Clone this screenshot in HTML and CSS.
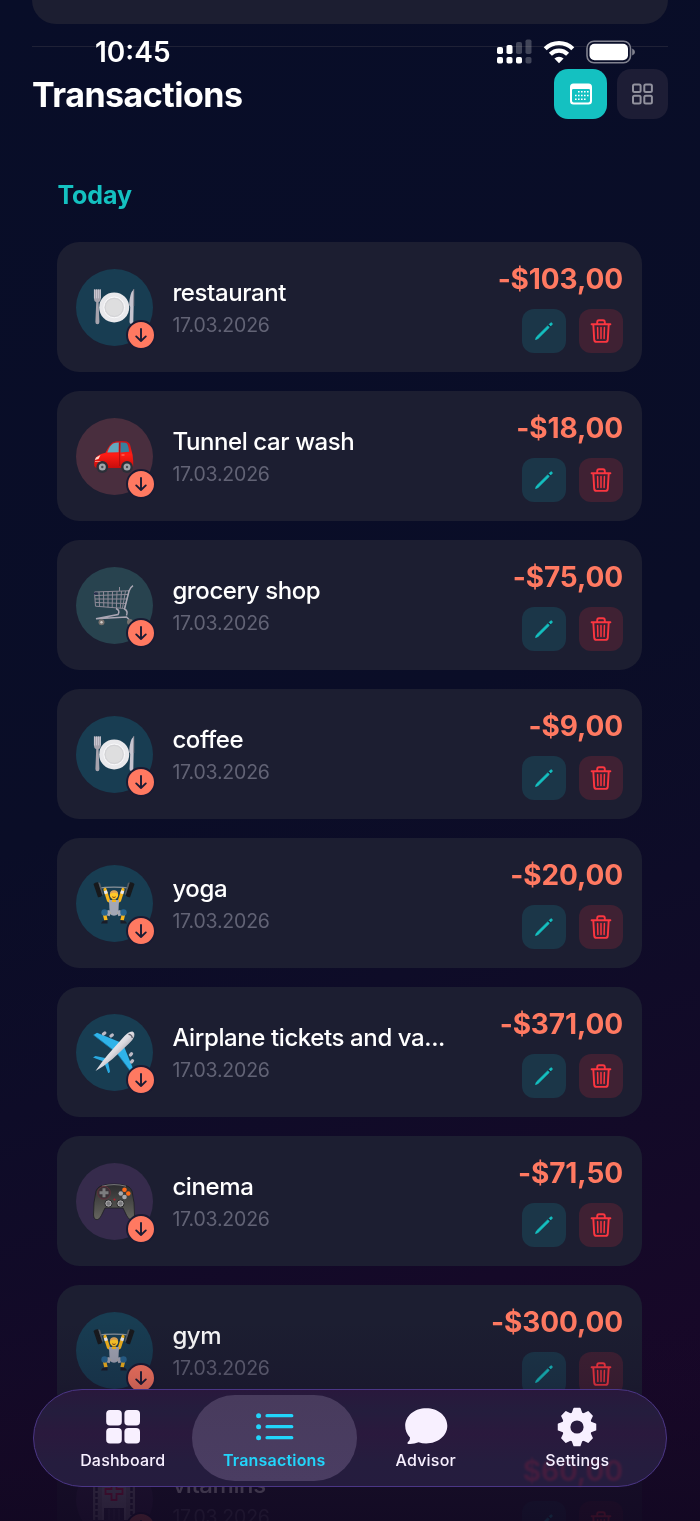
FILE: index.html
```html
<!DOCTYPE html>
<html lang="en">
<head>
    <meta charset="UTF-8">
    <meta name="viewport" content="width=device-width, initial-scale=1.0">
    <title>Transactions</title>
    <link rel="stylesheet" href="styles.css">
</head>
<body>
    <svg class="sprite" aria-hidden="true">
        <defs>
            <linearGradient id="metal" x1=".3" y1=".3" x2=".7" y2=".7">
                <stop offset="0" stop-color="#f4f3f7"/>
                <stop offset=".5" stop-color="#dcdae0"/>
                <stop offset="1" stop-color="#9b98a3"/>
            </linearGradient>
            <linearGradient id="red-paint" x1="0" y1="0" x2="0" y2="1">
                <stop offset="0" stop-color="#c3151a"/>
                <stop offset=".5" stop-color="#ff1c14"/>
                <stop offset="1" stop-color="#c80d0d"/>
            </linearGradient>
            <linearGradient id="pad-body" x1="0" y1="0" x2="0" y2="1">
                <stop offset="0" stop-color="#2b2b2e"/>
                <stop offset="1" stop-color="#66665f"/>
            </linearGradient>
        </defs>
        <symbol id="arrow-down" viewBox="0 0 26 26">
            <path d="M13 7v12M8.200 14.400 13 19l4.800-4.600" fill="none" stroke="#1a1b33" stroke-width="1.900" stroke-linecap="round" stroke-linejoin="round"/>
        </symbol>
        <symbol id="pencil" viewBox="0 0 24 24">
            <path d="M3.600 20.500 4.500 18 15.700 6.900 17.200 8.400 6 19.500Z" fill="currentColor" stroke="currentColor" stroke-width=".9" stroke-linejoin="round"/>
            <path d="M17.300 5.300 18.400 4.200a1 1 0 0 1 1.500 1.500L18.800 6.800Z" fill="currentColor" stroke="currentColor" stroke-width="1"/>
        </symbol>
        <symbol id="trash" viewBox="0 0 24 26">
            <path d="M2.600 6.200h18.800M8.200 6V4.200Q8.200 2.200 10 2.200h4q1.800 0 1.800 2V6M4.300 6.400 5.200 21.600Q5.400 23.900 7.600 23.900h8.800q2.200 0 2.400-2.300L19.700 6.400" fill="none" stroke="currentColor" stroke-width="1.900" stroke-linecap="round"/>
            <path d="M8.600 9.600l.3 11M12 9.600v11M15.400 9.600l-.3 11" fill="none" stroke="currentColor" stroke-width="1.500" stroke-linecap="round"/>
        </symbol>
        <symbol id="plate" viewBox="0 0 42 42">
            <path d="M1 3.500v9.500q0 2.600 2.200 3.200L2.400 36q0 2.200 2 2.200t2-2.200L5.600 16.200Q7.800 15.600 7.800 13V3.500" fill="#a6a3ad"/>
            <path d="M1.400 3.400v9M3.500 3.400v9M5.400 3.400v9M7.400 3.400v9" stroke="#d3d1da" stroke-width=".8"/>
            <path d="M41 3q-4.500 4-4.800 16l1 2-.7 15q0 2 1.900 2t1.900-2Z" fill="#c6c4cf"/>
            <path d="M40.800 3v17" stroke="#7d7a86" stroke-width=".8"/>
            <circle cx="21.200" cy="21.400" r="15" fill="#e9e9ec"/>
            <circle cx="21.200" cy="21.400" r="10.400" fill="#dededf" stroke="#f9f9fb" stroke-width="1"/>
            <circle cx="21.200" cy="21.400" r="9" fill="none" stroke="#c9c9cf" stroke-width=".6"/>
        </symbol>
        <symbol id="car" viewBox="0 0 42 42">
            <path d="M1.300 31q-.7-7 3-10 3.500-2.200 8.200-3.200Q16 10 19.400 7.400 23.500 5.800 32 6.200q4 .3 5.200 4L39.600 20q1 7 .6 11.500L37 33H3Z" fill="url(#red-paint)"/>
            <path d="M14.200 17.500Q16.500 10.800 20 8.600q2.600-1 5.800-1l-.2 9.600Z" fill="#62a9be"/>
            <path d="M27.600 7.600q5.400-.2 6.600 1.200 1.600 3 2 8l-8.700.6Z" fill="#397f9d"/>
            <path d="M26.600 8v23" stroke="#a30c10" stroke-width=".8"/>
            <path d="M3 22.500 7.500 20l-2 4-3.600 1Z" fill="#ffd9ce"/>
            <path d="M2 26.500h6M28.500 20h3" stroke="#ff8171" stroke-width="1"/>
            <circle cx="9.300" cy="32" r="5.900" fill="#2b2f38"/>
            <circle cx="9.300" cy="32" r="3.500" fill="#a2a6ab"/>
            <circle cx="9.300" cy="32" r="1.200" fill="#4a4e56"/>
            <circle cx="34" cy="32" r="5.900" fill="#2b2f38"/>
            <circle cx="34" cy="32" r="3.500" fill="#a2a6ab"/>
            <circle cx="34" cy="32" r="1.200" fill="#4a4e56"/>
        </symbol>
        <symbol id="cart" viewBox="0 0 42 42">
            <g fill="none" stroke="#8f8b98" stroke-width="1">
                <path d="M1.500 8 36 6.800 31.500 24.500 2.500 22.200Z"/>
                <path d="M2 11.500 35 10.500M2 15 34 15M2.300 18.500 33 19.500M6 8l.5 14.500M10.500 7.800l.3 15M15 7.700v15.500M19.500 7.500l-.3 16M24 7.300l-.6 16.500M28.500 7l-1.200 17M32.500 7 29.500 24M26.500 3v4"/>
                <path d="M40 1.600q-2.500 1.400-4 5.500L31.500 25q3.800 2 2 6.500" stroke="#aaa6b3" stroke-width="1.500"/>
                <path d="M23 24.500q4.500 2 2 6L3 34.700 33.500 33l3 3" stroke="#aaa6b3" stroke-width="1.500"/>
            </g>
            <path d="M1 8.500h3.500v2H1Z" fill="#272a4c"/>
            <circle cx="8.500" cy="38.300" r="3" fill="#77716d"/>
            <circle cx="8.500" cy="38.300" r="1.200" fill="#d0ccc9"/>
            <circle cx="37" cy="38" r="3" fill="#77716d"/>
        </symbol>
        <symbol id="lifter" viewBox="0 0 42 42">
            <path d="M3 6.500Q21 3.800 39 6.500" fill="none" stroke="#8c949b" stroke-width="1.200"/>
            <path d="M.5 2Q2 0 5.200.3L9.500 13Q8 15.500 5 15.200Z" fill="#17191c"/>
            <path d="M5.200.5 7 .8 10.300 12 9.200 13Z" fill="#555a61"/>
            <path d="M41.500 2Q40 0 36.800.3L32.500 13q1.500 2.500 4.500 2.200Z" fill="#17191c"/>
            <path d="M36.800.5 35 .8 31.700 12l1.100 1Z" fill="#555a61"/>
            <path d="M12 7.500 15.500 18.500l4 2.500M30 7.500l-3.500 11-4 2.500" fill="none" stroke="#f6b61b" stroke-width="3.200" stroke-linecap="round" stroke-linejoin="round"/>
            <path d="m12.300 8.800 1 3M29.700 8.800l-1 3" stroke="#e7e8ef" stroke-width="3.200"/>
            <path d="M16 18 26 18 25.300 32q-4.300 3.500-8.600 0Z" fill="#a3a7b5"/>
            <path d="M19 17.500h4v2.500h-4Z" fill="#f6b61b"/>
            <circle cx="21" cy="13" r="4.200" fill="#ffc928"/>
            <path d="M17 12Q16.800 8.200 21 8.200t4 3.800Q21 9.500 17 12Z" fill="#dfa455"/>
            <path d="M19.300 14.800q1.700 1.500 3.400 0" fill="none" stroke="#843f10" stroke-width="1"/>
            <path d="M17 32 11 30 13 38.500M25 32l6-2L29 38.500" fill="none" stroke="#f6b61b" stroke-width="3.400" stroke-linejoin="round"/>
            <path d="m17.300 31.500-3.300-.8M24.700 31.500l3.300-.8" stroke="#a3a7b5" stroke-width="5.500"/>
            <circle cx="11.500" cy="30.500" r="3.200" fill="#27648e"/>
            <circle cx="30.500" cy="30.500" r="3.200" fill="#27648e"/>
            <path d="M14.500 38.200v3.300H8q.5-2.200 3.500-3.300ZM27.500 38.200v3.300H34q-.5-2.200-3.500-3.300Z" fill="#191d29"/>
        </symbol>
        <symbol id="plane" viewBox="0 0 42 42">
            <path d="M.5 4 4 1.800 29 12 20 19Z" fill="#2fb3e9"/>
            <path d="M38 41 40 37.500 30 13 23 21Z" fill="#2fb3e9"/>
            <path d="M.5 4 20 19M38 41 23 21" stroke="#167eac" stroke-width=".8"/>
            <path d="M0 26.500 2.500 25 14.500 27.500 12 31ZM15.500 43l1.500-2.500L14.500 28 11 31Z" fill="#29a9e0"/>
            <path d="M2.500 40Q9 30.500 15 23.500L31.500 5Q36 .6 39.500.600 42 1.500 41.200 5.500 40 9 36 12.500L19.500 28Q11.500 35 2.500 40Z" fill="url(#metal)"/>
            <path d="M35.500 3.300q3.300.2 3.800 3.700" fill="none" stroke="#5a5c68" stroke-width="1.300"/>
            <g stroke="#bcb9c4" stroke-width="3.200" stroke-linecap="round">
                <path d="m10.500 3 1.300-1M18 5l1.300-1M37.500 24l1-1.300M38.500 31l1-1.300"/>
            </g>
        </symbol>
        <symbol id="gamepad" viewBox="0 0 42 42">
            <path d="M3 11Q5 6 11 5.200 14 4 21 4t10 1.200Q37 6 39 11q2.700 11 2.500 24-.5 5-3.800 4.600-2 0-4-4L30 28H12L8.300 35.600q-2 4-4 4Q1 40 .5 35 .3 22 3 11Z" fill="url(#pad-body)" stroke="#191a1c" stroke-width=".7"/>
            <path d="M9 6.200Q21 3 33 6.200" fill="none" stroke="#77777a" stroke-width="1"/>
            <circle cx="11" cy="12.800" r="6.400" fill="#3a3237" stroke="#67303b" stroke-width=".9"/>
            <path d="M9.500 8.200h3v3h3v3h-3v3h-3v-3h-3v-3h3Z" fill="#7c7c7e"/>
            <circle cx="31.500" cy="9.800" r="2.300" fill="#ff6a18"/>
            <circle cx="35.300" cy="13.500" r="2.300" fill="#ff6a18"/>
            <circle cx="31.500" cy="17" r="2.300" fill="#a8a8ac"/>
            <circle cx="27.800" cy="13.500" r="2.300" fill="#a8a8ac"/>
            <circle cx="21.500" cy="19.500" r="1.100" fill="#b0202b"/>
            <circle cx="15.500" cy="23.500" r="3.700" fill="#a1a1a3" stroke="#29292b" stroke-width="1"/>
            <circle cx="27.500" cy="23.500" r="3.700" fill="#a1a1a3" stroke="#29292b" stroke-width="1"/>
            <circle cx="15.500" cy="23.500" r="1.900" fill="#77777a"/>
            <circle cx="27.500" cy="23.500" r="1.900" fill="#77777a"/>
        </symbol>
        <symbol id="hospital" viewBox="0 0 42 42">
            <path d="M0 7h9V0h24v7h9v35H0Z" fill="#8c8a96"/>
            <path d="M9 0h24v42H9Z" fill="#a5a3b0"/>
            <path d="M3.500 9v33M38.500 9v33" stroke="#2d2a44" stroke-width="2.500" stroke-dasharray="4 2"/>
            <path d="M18.500 5h5v6h6v5h-6v6h-5v-6h-6v-5h6Z" fill="none" stroke="#e01f50" stroke-width="1.800"/>
            <path d="M11 30h20v12H11Z" fill="#35324d"/>
            <path d="M16 31v11M21 31v11M26 31v11" stroke="#5d5973" stroke-width="1"/>
        </symbol>
    </svg>

    <div class="screen">
        <div class="previous-card"></div>
        <hr class="divider">

        <header class="page-header">
            <h1>Transactions</h1>
            <div class="view-switch">
                <button class="view-btn view-btn-list" aria-label="By date">
                    <svg width="24" height="22" viewBox="0 0 24 22">
                        <path fill="#fff" fill-rule="evenodd" d="M4.500.5h15q3.500 0 3.500 3.500v14q0 3.500-3.500 3.500h-15Q1 21.500 1 18V4Q1 .5 4.500.5ZM4.300 6Q3 6 3 7.300v10.400q0 1.700 1.700 1.700h14.600q1.700 0 1.700-1.700V7.300Q21 6 19.700 6Z"/>
                        <g fill="#fff">
                            <path d="M9 8h1.600v1.600H9zM12 8h1.600v1.600H12zM15 8h1.600v1.600H15zM18 8h1.600v1.600H18zM6 11.700h1.600v1.600H6zM9 11.700h1.600v1.600H9zM12 11.700h1.600v1.600H12zM15 11.700h1.600v1.600H15zM18 11.700h1.600v1.600H18zM6 15.400h1.600V17H6zM9 15.400h1.600V17H9zM12 15.400h1.600V17H12zM15 15.400h1.600V17H15z"/>
                        </g>
                    </svg>
                </button>
                <button class="view-btn view-btn-grid" aria-label="By category">
                    <svg width="22" height="22" viewBox="0 0 22 22" fill="none" stroke="#92929e" stroke-width="2">
                        <rect x="1" y="1.500" width="7.600" height="7.600" rx="1.500"/>
                        <rect x="12.300" y="1.500" width="7.600" height="7.600" rx="1.500"/>
                        <rect x="1" y="12.800" width="7.600" height="7.600" rx="1.500"/>
                        <rect x="12.300" y="12.800" width="7.600" height="7.600" rx="1.500"/>
                    </svg>
                </button>
            </div>
        </header>

        <main class="day">
            <h2>Today</h2>
            <ul class="list">
                <li class="card">
                    <div class="category blue">
                        <svg class="emoji"><use href="#plate"/></svg>
                        <svg class="badge"><use href="#arrow-down"/></svg>
                    </div>
                    <div class="info">
                        <p class="name">restaurant</p>
                        <p class="date">17.03.2026</p>
                    </div>
                    <div class="side">
                        <p class="amount">-$103,00</p>
                        <div class="actions">
                            <button class="edit" aria-label="Edit"><svg><use href="#pencil"/></svg></button>
                            <button class="delete" aria-label="Delete"><svg><use href="#trash"/></svg></button>
                        </div>
                    </div>
                </li>
                <li class="card">
                    <div class="category red">
                        <svg class="emoji"><use href="#car"/></svg>
                        <svg class="badge"><use href="#arrow-down"/></svg>
                    </div>
                    <div class="info">
                        <p class="name">Tunnel car wash</p>
                        <p class="date">17.03.2026</p>
                    </div>
                    <div class="side">
                        <p class="amount">-$18,00</p>
                        <div class="actions">
                            <button class="edit" aria-label="Edit"><svg><use href="#pencil"/></svg></button>
                            <button class="delete" aria-label="Delete"><svg><use href="#trash"/></svg></button>
                        </div>
                    </div>
                </li>
                <li class="card">
                    <div class="category green">
                        <svg class="emoji"><use href="#cart"/></svg>
                        <svg class="badge"><use href="#arrow-down"/></svg>
                    </div>
                    <div class="info">
                        <p class="name">grocery shop</p>
                        <p class="date">17.03.2026</p>
                    </div>
                    <div class="side">
                        <p class="amount">-$75,00</p>
                        <div class="actions">
                            <button class="edit" aria-label="Edit"><svg><use href="#pencil"/></svg></button>
                            <button class="delete" aria-label="Delete"><svg><use href="#trash"/></svg></button>
                        </div>
                    </div>
                </li>
                <li class="card">
                    <div class="category blue">
                        <svg class="emoji"><use href="#plate"/></svg>
                        <svg class="badge"><use href="#arrow-down"/></svg>
                    </div>
                    <div class="info">
                        <p class="name">coffee</p>
                        <p class="date">17.03.2026</p>
                    </div>
                    <div class="side">
                        <p class="amount">-$9,00</p>
                        <div class="actions">
                            <button class="edit" aria-label="Edit"><svg><use href="#pencil"/></svg></button>
                            <button class="delete" aria-label="Delete"><svg><use href="#trash"/></svg></button>
                        </div>
                    </div>
                </li>
                <li class="card">
                    <div class="category blue">
                        <svg class="emoji"><use href="#lifter"/></svg>
                        <svg class="badge"><use href="#arrow-down"/></svg>
                    </div>
                    <div class="info">
                        <p class="name">yoga</p>
                        <p class="date">17.03.2026</p>
                    </div>
                    <div class="side">
                        <p class="amount">-$20,00</p>
                        <div class="actions">
                            <button class="edit" aria-label="Edit"><svg><use href="#pencil"/></svg></button>
                            <button class="delete" aria-label="Delete"><svg><use href="#trash"/></svg></button>
                        </div>
                    </div>
                </li>
                <li class="card">
                    <div class="category blue">
                        <svg class="emoji"><use href="#plane"/></svg>
                        <svg class="badge"><use href="#arrow-down"/></svg>
                    </div>
                    <div class="info">
                        <p class="name">Airplane tickets and va...</p>
                        <p class="date">17.03.2026</p>
                    </div>
                    <div class="side">
                        <p class="amount">-$371,00</p>
                        <div class="actions">
                            <button class="edit" aria-label="Edit"><svg><use href="#pencil"/></svg></button>
                            <button class="delete" aria-label="Delete"><svg><use href="#trash"/></svg></button>
                        </div>
                    </div>
                </li>
                <li class="card">
                    <div class="category purple">
                        <svg class="emoji"><use href="#gamepad"/></svg>
                        <svg class="badge"><use href="#arrow-down"/></svg>
                    </div>
                    <div class="info">
                        <p class="name">cinema</p>
                        <p class="date">17.03.2026</p>
                    </div>
                    <div class="side">
                        <p class="amount">-$71,50</p>
                        <div class="actions">
                            <button class="edit" aria-label="Edit"><svg><use href="#pencil"/></svg></button>
                            <button class="delete" aria-label="Delete"><svg><use href="#trash"/></svg></button>
                        </div>
                    </div>
                </li>
                <li class="card">
                    <div class="category blue">
                        <svg class="emoji"><use href="#lifter"/></svg>
                        <svg class="badge"><use href="#arrow-down"/></svg>
                    </div>
                    <div class="info">
                        <p class="name">gym</p>
                        <p class="date">17.03.2026</p>
                    </div>
                    <div class="side">
                        <p class="amount">-$300,00</p>
                        <div class="actions">
                            <button class="edit" aria-label="Edit"><svg><use href="#pencil"/></svg></button>
                            <button class="delete" aria-label="Delete"><svg><use href="#trash"/></svg></button>
                        </div>
                    </div>
                </li>
                <li class="card">
                    <div class="category purple">
                        <svg class="emoji"><use href="#hospital"/></svg>
                        <svg class="badge"><use href="#arrow-down"/></svg>
                    </div>
                    <div class="info">
                        <p class="name">vitamins</p>
                        <p class="date">17.03.2026</p>
                    </div>
                    <div class="side">
                        <p class="amount under-bar">$60,00</p>
                        <div class="actions">
                            <button class="edit" aria-label="Edit"><svg><use href="#pencil"/></svg></button>
                            <button class="delete" aria-label="Delete"><svg><use href="#trash"/></svg></button>
                        </div>
                    </div>
                </li>
            </ul>
        </main>

        <div class="status-bar">
            <span class="time">10:45</span>
            <div class="status-icons">
                <svg width="36" height="26" viewBox="0 0 36 26" fill="#fff">
                    <rect x="1" y="8" width="6" height="7" rx="1.800"/>
                    <rect x="1" y="18" width="6" height="6.500" rx="1.800"/>
                    <rect x="10.500" y="6" width="6" height="9" rx="1.800"/>
                    <rect x="10.500" y="18" width="6" height="6.500" rx="1.800"/>
                    <rect x="20" y="3" width="6" height="12" rx="1.800" opacity=".23"/>
                    <rect x="20" y="18" width="6" height="6.500" rx="1.800"/>
                    <rect x="29.500" y="0.500" width="6" height="14.500" rx="1.800" opacity=".23"/>
                    <rect x="29.500" y="18" width="6" height="6.500" rx="1.800" opacity=".23"/>
                </svg>
                <svg class="wifi" width="32" height="24" viewBox="0 0 32 24" fill="none" stroke="#fff" stroke-width="4.200">
                    <path d="M2.200 8.800a19.500 19.500 0 0 1 27.600 0"/>
                    <path d="M7.400 14.200a12 12 0 0 1 17.200 0"/>
                    <path d="M16 23.300 11.400 18.600a6.500 6.500 0 0 1 9.200 0Z" fill="#fff" stroke="none"/>
                </svg>
                <svg class="battery" width="50" height="24" viewBox="0 0 50 24">
                    <rect x="1" y="1.200" width="43.500" height="21.600" rx="7" fill="none" stroke="#81828f" stroke-width="1.600"/>
                    <rect x="3.500" y="3.700" width="38.500" height="16.600" rx="5" fill="#fff"/>
                    <path d="M46.200 8.500q2.800 1 2.800 3.500t-2.800 3.500Z" fill="#81828f"/>
                </svg>
            </div>
        </div>

        <div class="bottom-fade"></div>

        <nav class="tab-bar">
            <a class="tab">
                <svg width="36" height="36" viewBox="0 0 36 36" fill="#f8f0ff">
                    <rect x="1.200" y="1" width="15.600" height="15.600" rx="3.800"/>
                    <rect x="19.400" y="1" width="15.600" height="15.600" rx="3.800"/>
                    <rect x="1.200" y="19" width="15.600" height="15.600" rx="3.800"/>
                    <rect x="19.400" y="19" width="15.600" height="15.600" rx="3.800"/>
                </svg>
                <span>Dashboard</span>
            </a>
            <a class="tab active">
                <svg width="38" height="36" viewBox="0 0 38 36" fill="none" stroke="#22d5fb" stroke-width="3.200" stroke-linecap="round">
                    <path d="M12 6.700h24.800M12 17.700h24.800M12 28.700h24.800"/>
                    <path d="M3.600 6.700h.02M3.600 17.700h.02M3.600 28.700h.02" stroke-width="5"/>
                </svg>
                <span>Transactions</span>
            </a>
            <a class="tab">
                <svg width="44" height="36" viewBox="0 0 44 36" fill="#f8f0ff">
                    <path d="M22.200-.800C34-.800 43.300 6.800 43.300 16.800S34 34.500 22.200 34.500q-4.200 0-7.600-1.200Q9.500 35.500 4 35 2.600 34.200 4 33q2.300-1.800 2-4.600-4.800-4.800-4.800-11.600C1.200 6.800 10.500-.800 22.200-.800Z"/>
                </svg>
                <span>Advisor</span>
            </a>
            <a class="tab">
                <svg width="40" height="36" viewBox="-20 -18 40 36" fill="#f8f0ff">
                    <defs>
                        <mask id="gear-hole">
                            <rect x="-20" y="-20" width="40" height="40" fill="#fff"/>
                            <circle r="6.600" fill="#000"/>
                        </mask>
                    </defs>
                    <g mask="url(#gear-hole)" stroke="#f8f0ff" stroke-width="1.500" stroke-linejoin="round">
                        <circle r="14.300"/>
                        <path d="M-5.200-12-2.900-18.500H2.900L5.200-12ZM-5.200 12-2.900 18.500H2.900L5.200 12Z"/>
                        <path transform="rotate(45)" d="M-5.200-12-2.900-18.500H2.900L5.200-12ZM-5.200 12-2.900 18.500H2.900L5.200 12Z"/>
                        <path transform="rotate(90)" d="M-5.200-12-2.900-18.500H2.900L5.200-12ZM-5.200 12-2.900 18.500H2.900L5.200 12Z"/>
                        <path transform="rotate(135)" d="M-5.200-12-2.900-18.500H2.900L5.200-12ZM-5.200 12-2.900 18.500H2.900L5.200 12Z"/>
                    </g>
                </svg>
                <span>Settings</span>
            </a>
        </nav>
    </div>
</body>
</html>
```
FILE: styles.css
```css
* {
    box-sizing: border-box;
    padding: 0;
    margin: 0;
}

:root {
    --card: #1c1e31;
    --teal: #14c1c1;
    --coral: #ff7961;
    --muted: #626375;
    --red: #fb3640;
    --tab: #f8f0ff;
    --tab-active: #22d5fb;
}

body {
    background-color: #080b25;
    color: white;
    font-family: Inter, "Liberation Sans", sans-serif;
}

.sprite {
    display: block;
    width: 0;
    height: 0;
}

.screen {
    position: relative;
    width: 700px;
    height: 1521px;
    padding: 0 32px;
    overflow: hidden;
    background: linear-gradient(160deg, #080d28 0%, #0a0d27 48%, #0e0c28 63%, #150928 82%, #1a0628 100%);
}

.previous-card {
    height: 24px;
    background-color: var(--card);
    border-radius: 0 0 24px 24px;
}

.divider {
    height: 1px;
    margin-top: 22px;
    border: none;
    background-color: #1f2136;
}

.page-header {
    display: flex;
    justify-content: space-between;
    align-items: center;
    height: 50px;
    margin-top: 22px;
}

h1 {
    font-size: 34px;
    font-weight: 700;
    letter-spacing: -0.5px;
}

.view-switch {
    display: flex;
    gap: 10px;
}

button {
    display: flex;
    justify-content: center;
    align-items: center;
    border: none;
}

.view-btn {
    width: 51px;
    height: 50px;
    border-radius: 14px;
}

.view-btn-list {
    width: 53px;
    background-color: var(--teal);
}

.view-btn-grid {
    background-color: #1d1d35;
}

.day {
    padding: 0 26px 0 25.4px;
}

h2 {
    margin-top: 60px;
    color: var(--teal);
    font-size: 25px;
    font-weight: 650;
    line-height: 32px;
    letter-spacing: -0.1px;
}

.list {
    display: flex;
    flex-direction: column;
    gap: 19px;
    margin-top: 31.4px;
    list-style: none;
}

.card {
    display: flex;
    align-items: center;
    gap: 19px;
    height: 130px;
    padding: 0 19px;
    background-color: var(--card);
    border-radius: 22px;
}

.category {
    position: relative;
    display: flex;
    justify-content: center;
    align-items: center;
    width: 77px;
    height: 77px;
    border-radius: 50%;
}

.blue {
    background-color: #183d52;
}

.red {
    background-color: #492e3e;
}

.green {
    background-color: #28434f;
}

.purple {
    background-color: #362b4c;
}

.emoji {
    width: 42px;
    height: 42px;
    margin-right: 2px;
}

.badge {
    position: absolute;
    right: -3px;
    bottom: -4px;
    width: 30px;
    height: 30px;
    border: 2px solid #1a1b33;
    border-radius: 50%;
    background-color: var(--coral);
}

.info {
    flex: 1;
}

.name {
    font-size: 24px;
    font-weight: 500;
    line-height: 30px;
    letter-spacing: -0.4px;
    white-space: nowrap;
}

.date {
    margin-top: 5px;
    color: var(--muted);
    font-size: 19.5px;
    line-height: 24px;
    letter-spacing: -0.2px;
}

.side {
    display: flex;
    flex-direction: column;
    align-items: flex-end;
    gap: 13px;
}

.amount {
    color: var(--coral);
    font-size: 28px;
    font-weight: 650;
    line-height: 34px;
    letter-spacing: -0.1px;
}

/* shows faintly through the glass of the tab bar */
.under-bar {
    position: relative;
    z-index: 3;
    color: #441a34;
    mix-blend-mode: lighten;
    filter: blur(1px);
}

.actions {
    display: flex;
    gap: 13px;
}

.edit, .delete {
    width: 44px;
    height: 44.5px;
    border-radius: 12px;
}

.edit {
    background-color: #1b3648;
    color: var(--teal);
}

.edit svg {
    width: 24px;
    height: 24px;
}

.delete {
    background-color: #3f2133;
    color: var(--red);
}

.delete svg {
    width: 24px;
    height: 26px;
}

.status-bar {
    position: absolute;
    top: 38px;
    left: 95px;
    right: 64.5px;
    display: flex;
    justify-content: space-between;
    align-items: center;
    height: 28px;
}

.time {
    font-size: 28px;
    font-weight: 600;
    line-height: 28px;
}

.status-icons {
    display: flex;
    align-items: center;
}

.wifi, .battery {
    margin-left: 11px;
}

/* dims the list towards the tab bar */
.bottom-fade {
    position: absolute;
    left: 0;
    right: 0;
    bottom: 0;
    height: 200px;
    background: linear-gradient(rgba(20, 9, 36, 0) 0%, rgba(20, 9, 36, .2) 30%, rgba(20, 9, 36, .78) 75%, rgba(18, 8, 34, .87) 100%);
}

.tab-bar {
    position: absolute;
    left: 33px;
    bottom: 34px;
    display: flex;
    width: 634px;
    height: 98px;
    padding: 0 13px;
    border: 1.5px solid #4b3686;
    border-radius: 49px;
    background: linear-gradient(#29183c 0%, #241d3d 22%, #2a193d 45%, #251d3e 75%, #251c3e 100%);
}

.tab {
    position: relative;
    display: flex;
    flex: 1;
    flex-direction: column;
    align-items: center;
    padding-top: 19px;
    color: var(--tab);
    font-size: 16px;
    font-weight: 500;
    line-height: 20px;
    letter-spacing: .2px;
}

.tab svg {
    position: relative;
    height: 36px;
    overflow: visible;
}

.tab span {
    position: relative;
    margin-top: 5px;
}

.active {
    color: var(--tab-active);
    font-weight: 600;
}

.active::before {
    content: "";
    position: absolute;
    top: 5px;
    left: -7px;
    right: -7px;
    height: 86px;
    border-radius: 43px;
    background: linear-gradient(#483b5d, #4a3d62);
}
```
